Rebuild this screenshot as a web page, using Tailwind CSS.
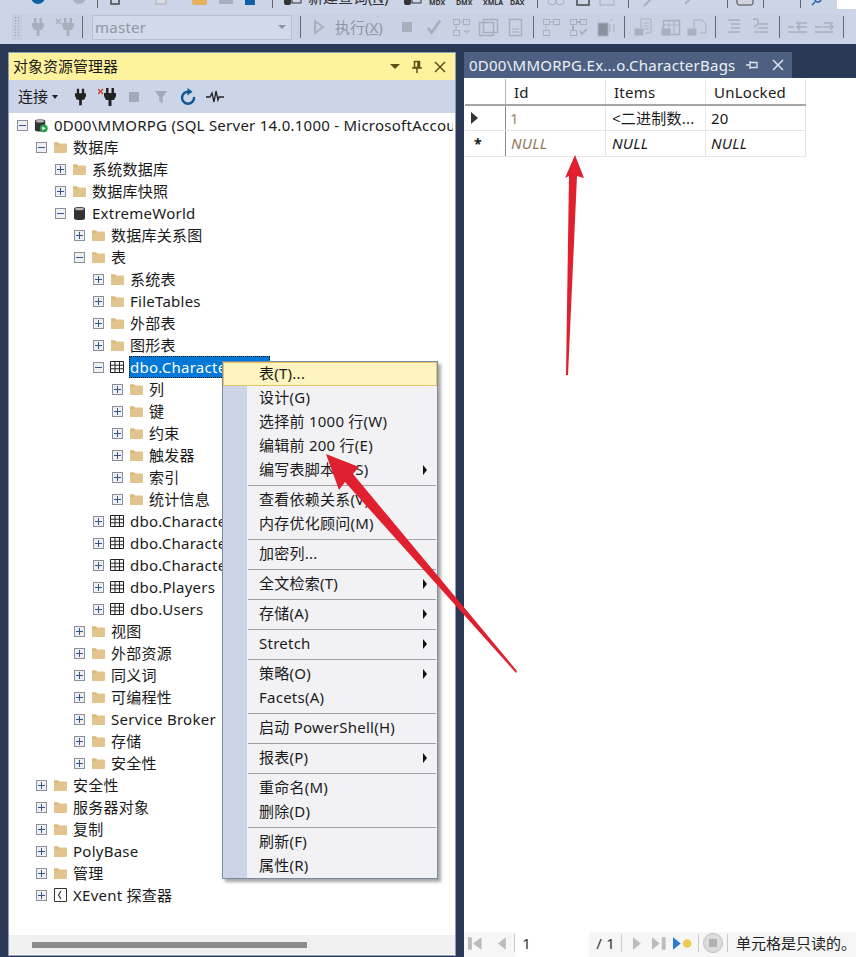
<!DOCTYPE html>
<html lang="zh-CN">
<head>
  <meta charset="UTF-8">
  <title>SSMS</title>
  <script src="https://cdn.jsdelivr.net/npm/@tailwindcss/browser@4"></script>
</head>
<body class="relative w-[856px] h-[957px] overflow-hidden bg-[#293955] text-[15px] tracking-[0.25px] text-[#1a1a1a] font-['Noto_Sans','Noto_Sans_CJK_SC',sans-serif]">

  <!-- toolbars -->
  <header class="h-[44px] bg-[#ccd5e8] overflow-hidden">
    <div class="h-[11px] flex items-start overflow-hidden text-[#333] tracking-normal">
      <svg class="shrink-0" width="97" height="11"><circle cx="38" cy="-3" r="7" fill="#0e5fa8"/><circle cx="79" cy="-3" r="7" fill="#aab2c4"/></svg>
      <div class="w-px h-[8px] bg-[#666]"></div>
      <svg class="shrink-0" width="174" height="11"><rect x="13" y="-4" width="8" height="8" fill="none" stroke="#444" stroke-width="1.500"/><rect x="58" y="-4" width="10" height="8" fill="#d8dbe4" stroke="#aab"/><rect x="94" y="-4" width="15" height="9" rx="2" fill="#e4b25c"/><rect x="121" y="-4" width="14" height="8" fill="#a7aebd"/><rect x="147" y="-4" width="10" height="9" fill="#0e5fa8"/></svg>
      <div class="w-px h-[8px] bg-[#666]"></div>
      <svg class="ml-[9px] shrink-0" width="26" height="11"><rect x="2" y="-3" width="7" height="8" rx="2" fill="#333"/><rect x="10" y="-3" width="9" height="6" fill="none" stroke="#333"/></svg>
      <span class="w-[80px] mt-[-10px] leading-[15px] whitespace-nowrap">新建查询(<u>N</u>)</span>
      <svg class="ml-[14px] shrink-0" width="27" height="11"><rect x="2" y="-3" width="7" height="8" rx="2" fill="#333"/><rect x="10" y="-3" width="9" height="6" fill="none" stroke="#333"/></svg>
      <span class="w-[27px] mt-[-1px] text-[7px] font-bold leading-[8px]">MDX</span>
      <span class="w-[27px] mt-[-1px] text-[7px] font-bold leading-[8px]">DMX</span>
      <span class="w-[27px] mt-[-1px] text-[7px] font-bold leading-[8px]">XMLA</span>
      <span class="w-[27px] mt-[-1px] text-[7px] font-bold leading-[8px]">DAX</span>
      <div class="w-px h-[8px] bg-[#666]"></div>
      <svg class="shrink-0" width="90" height="11"><circle cx="14" cy="1" r="4" fill="none" stroke="#a7aebd"/><circle cx="22" cy="1" r="4" fill="none" stroke="#a7aebd"/><rect x="39" y="-4" width="12" height="9" fill="none" stroke="#444" stroke-width="1.500"/><rect x="62" y="-4" width="14" height="9" fill="none" stroke="#aab"/></svg>
      <div class="w-px h-[8px] bg-[#666]"></div>
      <svg class="shrink-0" width="98" height="11"><path d="M15 6l8-8M62 -2l-6 6" stroke="#a7aebd" stroke-width="2" fill="none"/></svg>
      <div class="w-px h-[8px] bg-[#666]"></div>
      <svg class="shrink-0" width="35" height="11"><rect x="9" y="-4" width="16" height="9" rx="2" fill="#cfd4de" stroke="#444"/></svg>
      <div class="w-px h-[8px] bg-[#666]"></div>
      <div class="w-[36px] shrink-0"></div>
      <div class="w-px h-[8px] bg-[#666]"></div>
      <svg class="shrink-0" width="36" height="11"><circle cx="17" cy="-1" r="3" fill="none" stroke="#1f5fa8" stroke-width="1.500"/><path d="M14 2l-3 3" stroke="#1f5fa8" stroke-width="1.500"/></svg>
      <div class="w-[19px] h-[9px] bg-white shrink-0"></div>
    </div>
    <div class="h-[33px] pt-[3px] flex items-start">
      <div class="ml-[12px] w-[10px] h-[26px] bg-[#c4cde0] flex items-center justify-center">
        <div class="w-[6px] h-[22px] bg-[radial-gradient(#9aa3b5_1px,transparent_1px)] bg-[length:3px_3px]"></div>
      </div>
      <div class="h-[26px] flex items-center shrink-0 bg-[#c9d2e5]">
        <svg class="ml-[10px]" width="12" height="18" viewBox="0 0 12 18" fill="#a9afbc"><path d="M2 0h2.500v5h3V0H10v5h2v3l-2 4H7.500v6h-3v-6H2L0 8V5h2z"/></svg>
        <svg class="ml-[12px]" width="18" height="18" viewBox="0 0 18 18" fill="#a9afbc"><path d="M8 0h2.500v5h3V0H16v5h2v3l-2 4h-2.500v6h-3v-6H8L6 8V5h2z"/><path d="M0 1l5 5M5 1L0 6" stroke="#a9afbc" stroke-width="1.500"/></svg>
        <div class="ml-[8px] w-px h-[22px] bg-[#606a7d]"></div>
        <div class="ml-[9px] w-[200px] h-[25px] bg-[#d1d9ea] border border-[#b7c0d2] flex items-center justify-between pl-[2px] pr-[5px] text-[#9097a6]">
          <span>master</span>
          <span class="w-0 h-0 border-x-[4px] border-x-transparent border-t-[4px] border-t-[#8b93a5]"></span>
        </div>
        <div class="ml-[8px] w-px h-[22px] bg-[#606a7d]"></div>
        <svg class="ml-[12px]" width="12" height="16" viewBox="0 0 12 16" fill="none" stroke="#a9afbc" stroke-width="2"><path d="M2 2l8 6-8 6z"/></svg>
        <span class="ml-[10px] w-[49px] whitespace-nowrap tracking-normal text-[#8f95a3]">执行(<u>X</u>)</span>
        <div class="ml-[18px] w-[10px] h-[10px] bg-[#a9afbc]"></div>
        <svg class="ml-[15px]" width="15" height="16" viewBox="0 0 16 16" fill="none" stroke="#a9afbc" stroke-width="3"><path d="M1 9l4 5 9-13"/></svg>
        <svg class="ml-[10px]" width="81" height="22" viewBox="0 0 81 22" fill="none" stroke="#a9afbc"><rect x="1.500" y="3.500" width="6" height="5"/><rect x="11.500" y="3.500" width="6" height="5"/><rect x="1.500" y="14.500" width="6" height="5"/><path d="M7 6h5M4 9v5M12 15l3 3 3-3z"/><rect x="27.500" y="6.500" width="14" height="13" stroke-width="1.500"/><rect x="31.500" y="3.500" width="14" height="13" stroke-width="1.500"/><rect x="57.500" y="3.500" width="12" height="16" stroke-width="1.500"/><path d="M60 13h7M60 16h7"/></svg>
        <div class="w-px h-[22px] bg-[#606a7d]"></div>
        <svg width="90" height="22" viewBox="0 0 90 22" fill="none" stroke="#a9afbc"><rect x="9.500" y="3.500" width="6" height="5"/><rect x="19.500" y="3.500" width="6" height="5"/><rect x="9.500" y="14.500" width="6" height="5"/><path d="M15 6h5M12 9v5"/><rect x="36.500" y="3.500" width="6" height="5"/><rect x="46.500" y="3.500" width="6" height="5"/><rect x="36.500" y="14.500" width="6" height="5"/><path d="M42 6h5M39 9v5M46 15l2 3 5-5" stroke-width="2"/><rect x="64" y="7" width="10" height="13" fill="#8a909e"/><path d="M76 4h3M76 8v8M80 8v8"/></svg>
        <div class="w-px h-[22px] bg-[#606a7d]"></div>
        <svg width="90" height="22" viewBox="0 0 90 22" fill="none" stroke="#a9afbc"><path d="M16 12V3h10v14h-6M19 7h5M19 10h5M19 13h5"/><rect x="10" y="13" width="8" height="6" fill="#a9afbc"/><rect x="38.500" y="4.500" width="16" height="14" stroke-width="1.500"/><path d="M38 9h17M44 5v14M49 5v14"/><rect x="37" y="13" width="8" height="6" fill="#a9afbc"/><path d="M69 12V4h8l4 4v9h-6"/><rect x="63" y="13" width="8" height="6" fill="#a9afbc"/></svg>
        <div class="w-px h-[22px] bg-[#606a7d]"></div>
        <svg width="63" height="22" viewBox="0 0 63 22" fill="none" stroke="#a9afbc" stroke-width="1.500"><path d="M12 4h12M15 8h9M15 12h9M12 16h12M42 8h10M42 12h10M38 16h14M37 4q4-3 5 1t-3 5v2"/></svg>
        <div class="w-px h-[22px] bg-[#606a7d]"></div>
        <svg width="63" height="22" viewBox="0 0 63 22" fill="none" stroke="#a9afbc" stroke-width="1.500"><path d="M8 11h6M8 16h19M16 7h11M27 11h-10M20 8l-3 3 3 3M35 11h7M35 16h18M44 7h9M43 11h10M50 8l3 3-3 3"/></svg>
        <div class="w-px h-[22px] bg-[#606a7d]"></div>
      </div>
    </div>
  </header>

  <main class="pt-[8px] pl-[8px] flex items-start">
    <!-- object explorer -->
    <section class="w-[448px] h-[904px] flex flex-col border border-[#8e9bbc] bg-white">
      <div class="h-[27px] shrink-0 bg-[#fff29d] flex items-center pl-[4px] tracking-normal">
        <span class="grow">对象资源管理器</span>
        <span class="w-0 h-0 border-x-[5px] border-x-transparent border-t-[5px] border-t-[#5c4f1c] mr-[11px]"></span>
        <svg class="mr-[11px]" width="12" height="14" viewBox="0 0 12 14" fill="none" stroke="#5c4f1c" stroke-width="1.500"><path d="M3.500 1.500h5v6h-5zM1 8h10M6 8v5M7 2v5"/></svg>
        <svg class="mr-[9px]" width="12" height="12" viewBox="0 0 12 12" stroke="#5c4f1c" stroke-width="1.500"><path d="M1 1l10 10M11 1L1 11"/></svg>
      </div>
      <div class="h-[33px] shrink-0 bg-[#ccd5e8] flex items-center">
        <span class="ml-[9px] w-[30px] tracking-normal">连接</span>
        <span class="ml-[4px] w-0 h-0 border-x-[3px] border-x-transparent border-t-[4px] border-t-[#222]"></span>
        <svg class="ml-[17px]" width="11" height="18" viewBox="0 0 12 18" fill="#222"><path d="M2 0h2.500v5h3V0H10v5h2v3l-2 4H7.500v6h-3v-6H2L0 8V5h2z"/></svg>
        <svg class="ml-[12px]" width="18" height="18" viewBox="0 0 18 18"><path d="M0 1l5 5M5 1L0 6" stroke="#d23b2a" stroke-width="1.300"/><path fill="#222" d="M8 0h2.500v5h3V0H16v5h2v3l-2 4h-2.500v6h-3v-6H8L6 8V5h2z"/></svg>
        <div class="ml-[13px] w-[10px] h-[10px] bg-[#a3a9b8]"></div>
        <svg class="ml-[15px]" width="14" height="16" viewBox="0 0 16 16" fill="#a3a9b8"><path d="M1 1h14L10 8v7L6 13V8z"/></svg>
        <svg class="ml-[12px]" width="16" height="18" viewBox="0 0 16 18" fill="none"><path d="M9 3.800A6 6 0 1 0 14 9" stroke="#10568f" stroke-width="2.500"/><path d="M7.500 0l5 3.800-5 3.800z" fill="#10568f"/></svg>
        <svg class="ml-[10px]" width="18" height="14" viewBox="0 0 18 14" fill="none" stroke="#222" stroke-width="1.300"><path d="M0 7h4l2-4 2 9 2-11 2 9 1-3h5"/></svg>
      </div>
      <div id="tree" class="grow bg-white pt-[1px] pr-[2px] overflow-hidden"></div>
      <div class="h-[19px] shrink-0 bg-[#f0f0f0] pt-[7px] pl-[23px] mb-[1px]">
        <div class="h-[6px] w-[275px] bg-[#8c8c8c]"></div>
      </div>
    </section>

    <!-- table editor -->
    <section class="ml-[8px] w-[392px] h-[905px] flex flex-col">
      <div class="h-[26px] shrink-0 w-[328px] bg-[#4d6082] text-[#eef1f7] flex items-center pl-[5px]">
        <span class="grow whitespace-nowrap">0D00\MMORPG.Ex...o.CharacterBags</span>
        <svg class="mr-[14px]" width="12" height="10" viewBox="0 0 12 10" fill="none" stroke="#dfe5f0" stroke-width="1.300"><path d="M4 1v8M4 5H0M4 2.500h7v5H4"/></svg>
        <svg class="mr-[8px]" width="12" height="12" viewBox="0 0 12 12" stroke="#dfe5f0" stroke-width="1.500"><path d="M1 1l10 10M11 1L1 11"/></svg>
      </div>
      <div class="grow bg-white pl-[1px] pt-[1px]">
        <div class="w-[341px]">
          <div class="h-[27px] flex border-b-2 border-[#a5a5a5] leading-[26px]">
            <div class="w-[41px] border-r border-[#b5b5b5]"></div>
            <div class="w-[100px] pl-[8px] border-r border-[#e6e6e6]">Id</div>
            <div class="w-[100px] pl-[8px] border-r border-[#e6e6e6]">Items</div>
            <div class="w-[100px] pl-[8px] border-r border-[#e6e6e6]">UnLocked</div>
          </div>
          <div class="h-[25px] flex border-b border-[#e6e6e6] leading-[25px]">
            <div class="w-[41px] border-r border-[#8a8a8a] flex items-center pl-[6px]"><span class="w-0 h-0 border-y-[6px] border-y-transparent border-l-[7px] border-l-[#333]"></span></div>
            <div class="w-[100px] pl-[4px] border-r border-[#e6e6e6] text-[#a08a68]">1</div>
            <div class="w-[100px] pl-[6px] border-r border-[#e6e6e6] whitespace-nowrap overflow-hidden">&lt;二进制数...</div>
            <div class="w-[100px] pl-[5px] border-r border-[#e6e6e6]">20</div>
          </div>
          <div class="h-[26px] flex border-b border-[#e6e6e6] italic leading-[25px]">
            <div class="w-[41px] border-r border-[#8a8a8a] flex items-center pl-[9px] not-italic font-bold text-[14px]">*</div>
            <div class="w-[100px] pl-[5px] border-r border-[#e6e6e6] text-[#8f7a5c]">NULL</div>
            <div class="w-[100px] pl-[6px] border-r border-[#e6e6e6]">NULL</div>
            <div class="w-[100px] pl-[5px] border-r border-[#e6e6e6]">NULL</div>
          </div>
        </div>
      </div>
      <!-- record navigator -->
      <div class="h-[25px] shrink-0 bg-[#f6f6f6] flex items-center pb-[3px]">
        <svg class="ml-[4px]" width="15" height="15" viewBox="0 0 15 15" fill="#bcbcbc"><path d="M0 1h4v13H0zM14 1v13L5 7.500z"/></svg>
        <svg class="ml-[14px]" width="10" height="15" viewBox="0 0 10 15" fill="#bcbcbc"><path d="M9 1v13L1 7.500z"/></svg>
        <div class="ml-[8px] w-px h-[18px] bg-[#c8c8c8]"></div>
        <div class="w-[76px] h-[25px] mb-[-3px] bg-white pl-[7px] leading-[22px] text-[#333]">1</div>
        <span class="ml-[7px] w-[20px] whitespace-nowrap text-[#333]">/ 1</span>
        <div class="ml-[5px] w-px h-[18px] bg-[#c8c8c8]"></div>
        <svg class="ml-[10px]" width="10" height="15" viewBox="0 0 10 15" fill="#bcbcbc"><path d="M1 1v13l8-6.500z"/></svg>
        <svg class="ml-[11px]" width="14" height="15" viewBox="0 0 14 15" fill="#bcbcbc"><path d="M0 1v13l8-6.500zM10 1h4v13h-4z"/></svg>
        <svg class="ml-[7px]" width="20" height="15" viewBox="0 0 20 15"><path d="M0 1v13l8-6.500z" fill="#2a7ad8"/><circle cx="14.500" cy="7.500" r="4.500" fill="#edc95a"/></svg>
        <div class="ml-[5px] w-px h-[18px] bg-[#c8c8c8]"></div>
        <div class="ml-[5px] w-[20px] h-[20px] rounded-full bg-[#dcdcdc] border border-[#c0c0c0] flex items-center justify-center"><div class="w-[8px] h-[8px] bg-[#b0b0b0]"></div></div>
        <div class="ml-[4px] w-px h-[18px] bg-[#c8c8c8]"></div>
        <span class="ml-[8px] whitespace-nowrap tracking-normal text-[#222]">单元格是只读的。</span>
      </div>
    </section>
  </main>

  <!-- context menu -->
  <div id="menu" class="absolute left-[222px] top-[361px] w-[216px] border border-[#7a8aa5] bg-[#f2f2f5] shadow-[3px_3px_3px_rgba(0,0,0,0.35)] bg-[linear-gradient(to_right,#ccd5e8_24px,transparent_24px)]"></div>

  <!-- annotation arrows -->
  <svg class="absolute left-0 top-0 pointer-events-none" width="856" height="957">
    <path fill="#e0202e" d="M575 155L584 178 577 176 568 375 566 375 569 176 565 178z"/>
    <path fill="#e0202e" d="M326 454L359 467 353 474 517 671 516 673 345 482 339 490z"/>
  </svg>

  <script>
    // [depth, kind, text, state]
    const rows = [
      [0, 'server', '0D00\\MMORPG (SQL Server 14.0.1000 - MicrosoftAccount\\user)', '-'],
      [1, 'folder', '数据库', '-'],
      [2, 'folder', '系统数据库', '+'],
      [2, 'folder', '数据库快照', '+'],
      [2, 'db', 'ExtremeWorld', '-'],
      [3, 'folder', '数据库关系图', '+'],
      [3, 'folder', '表', '-'],
      [4, 'folder', '系统表', '+'],
      [4, 'folder', 'FileTables', '+'],
      [4, 'folder', '外部表', '+'],
      [4, 'folder', '图形表', '+'],
      [4, 'table', 'dbo.CharacterBags', '-', true],
      [5, 'folder', '列', '+'],
      [5, 'folder', '键', '+'],
      [5, 'folder', '约束', '+'],
      [5, 'folder', '触发器', '+'],
      [5, 'folder', '索引', '+'],
      [5, 'folder', '统计信息', '+'],
      [4, 'table', 'dbo.CharacterItems', '+'],
      [4, 'table', 'dbo.CharacterQuests', '+'],
      [4, 'table', 'dbo.Characters', '+'],
      [4, 'table', 'dbo.Players', '+'],
      [4, 'table', 'dbo.Users', '+'],
      [3, 'folder', '视图', '+'],
      [3, 'folder', '外部资源', '+'],
      [3, 'folder', '同义词', '+'],
      [3, 'folder', '可编程性', '+'],
      [3, 'folder', 'Service Broker', '+'],
      [3, 'folder', '存储', '+'],
      [3, 'folder', '安全性', '+'],
      [1, 'folder', '安全性', '+'],
      [1, 'folder', '服务器对象', '+'],
      [1, 'folder', '复制', '+'],
      [1, 'folder', 'PolyBase', '+'],
      [1, 'folder', '管理', '+'],
      [1, 'xevent', 'XEvent 探查器', '+'],
    ];

    const icons = {
      folder: '<svg width="14" height="12" viewBox="0 0 14 12"><path fill="#e2c48f" d="M1 1.500h4l1 1h7q1 0 1 1V11q0 1-1 1H1z"/><path fill="#d9b878" d="M1 1.500h4l1 1v1.500H1z"/></svg>',
      table: '<svg width="14" height="12" viewBox="0 0 14 12" fill="none" stroke="#222"><path d="M.5.500h13v11H.5zM.5 4.200h13M.5 7.800h13M5 .5v11M9.500 .5v11"/></svg>',
      db: '<svg width="13" height="15" viewBox="0 0 13 15"><path fill="#333" d="M1 2.500C1 .5 12 .5 12 2.500v10c0 2-11 2-11 0z"/><ellipse cx="6.500" cy="3" rx="4.500" ry="1.300" fill="#bbb"/></svg>',
      server: '<svg width="15" height="15" viewBox="0 0 15 15"><path fill="#333" d="M1 2.500C1 .5 12 .5 12 2.500v10c0 2-11 2-11 0z"/><ellipse cx="6.500" cy="3" rx="4.500" ry="1.300" fill="#bbb"/><circle cx="10.500" cy="10.500" r="4.200" fill="#2e9e4a"/><path fill="#fff" d="M9 8.500v4l3.500-2z"/></svg>',
      xevent: '<svg width="13" height="14" viewBox="0 0 13 14" fill="none" stroke="#333"><path d="M.5.500h12v13H.5z"/><path d="M7 3L4.500 7 7 11" stroke-width="1.200"/></svg>',
    };

    function box(state) {
      const plus = state === '+' ? '<div class="absolute left-[4px] top-[1px] w-px h-[7px] bg-[#34558a]"></div>' : '';
      return '<div class="relative shrink-0 mt-[1px] w-[11px] h-[11px] border border-[#8a8f99] bg-[#eef0f4]">' +
        '<div class="absolute left-[1px] top-[4px] w-[7px] h-px bg-[#34558a]"></div>' + plus + '</div>';
    }

    document.getElementById('tree').innerHTML = rows.map(([depth, kind, text, state, selected]) => {
      const label = selected
        ? `<span class="ml-[1px] h-[22px] w-[141px] shrink-0 pl-[1px] bg-[#0078d7] text-white outline-1 outline-dotted outline-[#111] -outline-offset-1 leading-[22px] whitespace-nowrap overflow-hidden">${text}</span>`
        : `<span class="ml-[2px] whitespace-nowrap">${text}</span>`;
      return `<div class="h-[22px] flex items-center overflow-hidden" style="padding-left:${8 + 19 * depth}px">` +
        box(state) +
        `<span class="ml-[6px] w-[14px] shrink-0 flex justify-center">${icons[kind]}</span>` +
        `<span class="ml-[4px]"></span>${label}</div>`;
    }).join('');

    // null = separator, '>' = has submenu
    const items = [
      ['表(T)...'], ['设计(G)'], ['选择前 1000 行(W)'], ['编辑前 200 行(E)'], ['编写表脚本为(S)', '>'], null,
      ['查看依赖关系(V)'], ['内存优化顾问(M)'], null,
      ['加密列...'], null,
      ['全文检索(T)', '>'], null,
      ['存储(A)', '>'], null,
      ['Stretch', '>'], null,
      ['策略(O)', '>'], ['Facets(A)'], null,
      ['启动 PowerShell(H)'], null,
      ['报表(P)', '>'], null,
      ['重命名(M)'], ['删除(D)'], null,
      ['刷新(F)'], ['属性(R)'],
    ];

    document.getElementById('menu').innerHTML = items.map((item, i) => {
      if (!item) return '<div class="h-[6px] ml-[25px] mr-[1px] flex items-center"><div class="w-full h-px bg-[#a0a0a0]"></div></div>';
      const arrow = item[1] ? '<span class="absolute right-[10px] top-[7px] w-0 h-0 border-y-[5px] border-y-transparent border-l-[4px] border-l-[#111]"></span>' : '';
      if (i === 0) return `<div class="relative h-[24px] pl-[35px] leading-[20px] whitespace-nowrap bg-[#fdf4bf] border border-[#e5c365]">${item[0]}</div>`;
      return `<div class="relative h-[24px] pl-[36px] leading-[22px] whitespace-nowrap">${item[0]}${arrow}</div>`;
    }).join('');
  </script>
</body>
</html>
